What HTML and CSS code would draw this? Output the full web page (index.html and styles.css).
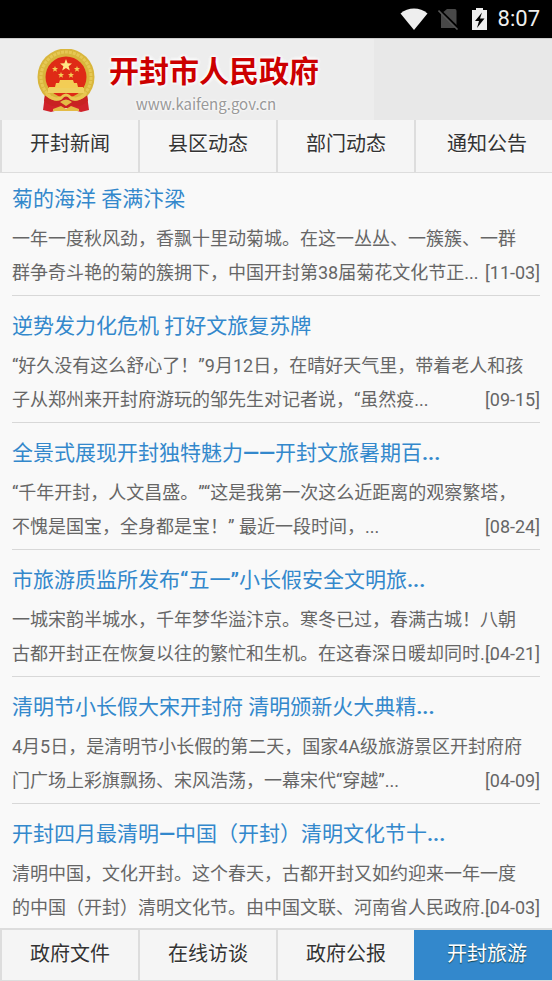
FILE: index.html
```html
<!DOCTYPE html>
<html lang="zh-CN">
<head>
<meta charset="utf-8">
<meta name="viewport" content="width=device-width, initial-scale=1">
<title>开封市人民政府</title>
<link rel="stylesheet" href="styles.css">
</head>
<body>
<div class="status">
  <svg class="wifi" viewBox="0 0 28 22" aria-hidden="true"><path d="M0.500 5.500C8-1.200 20-1.200 27.500 5.500L14 22Z" fill="#eee"/></svg>
  <svg class="sim" viewBox="0 0 21 22" aria-hidden="true"><path d="M9 1H17Q18.500 1 18.500 3V20H3V6Z" fill="#484848"/><path d="M1.500 2L21 21" stroke="#000" stroke-width="2.500"/><path d="M0.500 2.500L19.500 21.500" stroke="#555" stroke-width="1.600"/></svg>
  <svg class="battery" viewBox="0 0 15 22" aria-hidden="true"><path d="M4 0H11V2H15V22H0V2H4Z" fill="#eee"/><path d="M10 4.500L3 13H7L5 20L12.500 10.500H8Z" fill="#000"/></svg>
  <span class="clock">8:07</span>
</div>
<header class="banner">
  <div class="brand">
    <svg class="emblem" viewBox="0 0 58 63" aria-hidden="true">
      <path d="M8 46L6 61L14 63L29 59L44 63L52 61L50 46Z" fill="#d0222a"/>
      <circle cx="29" cy="28" r="28.500" fill="#d9b63c"/>
      <circle cx="29" cy="28" r="25" fill="none" stroke="#e6c854" stroke-width="3" stroke-dasharray="3 1"/>
      <circle cx="29" cy="28" r="20.500" fill="#df2a16"/>
      <path d="M29 10L30.600 14.300L35 14.500L31.600 17.300L32.800 21.500L29 19.100L25.200 21.500L26.400 17.300L23 14.500L27.400 14.300Z" fill="#ffe785"/>
      <g fill="#f3cd55">
        <path d="M18 17l.8 2 2.200.1-1.700 1.400.6 2.200-1.900-1.200-1.900 1.200.6-2.200-1.700-1.400 2.200-.1z"/>
        <path d="M40 17l.8 2 2.200.1-1.700 1.400.6 2.200-1.900-1.200-1.900 1.200.6-2.200-1.700-1.400 2.200-.1z"/>
        <path d="M24 23l.8 2 2.200.1-1.700 1.400.6 2.200-1.900-1.200-1.900 1.200.6-2.200-1.700-1.400 2.200-.1z"/>
        <path d="M34 23l.8 2 2.200.1-1.700 1.400.6 2.200-1.900-1.200-1.900 1.200.6-2.200-1.700-1.400 2.200-.1z"/>
        <path d="M23 31H36L37 34H40L41 38H46V43H12V38H18L19 34H22Z"/>
      </g>
      <path d="M11 39H47V44H11Z" fill="#efd060"/>
      <path d="M8 46Q17 54 24 51Q29 43 34 51Q41 54 50 46L51 52Q42 60 35 56Q29 61 23 56Q16 60 7 52Z" fill="#c82222"/>
      <path d="M9 45Q17 52 24 49Q29 43 34 49Q41 52 49 45" fill="none" stroke="#e9c64f" stroke-width="3"/>
      <path d="M16 60L24 57L29 60L34 57L42 60V62H16ZM23 53Q29 48 35 53L29 57Z" fill="#e4bb45"/>
    </svg>
    <div class="brand-text">
      <h1>开封市人民政府</h1>
      <span class="site">www.kaifeng.gov.cn</span>
    </div>
  </div>
</header>
<nav class="tabs">
  <a href="#">开封新闻</a><a href="#">县区动态</a><a href="#">部门动态</a><a href="#">通知公告</a>
</nav>
<main class="news">
  <article>
    <h2><a href="#">菊的海洋 香满汴梁</a></h2>
    <p>一年一度秋风劲，香飘十里动菊城。在这一丛丛、一簇簇、一群<br>群争奇斗艳的菊的簇拥下，中国开封第38届菊花文化节正...</p>
    <time>[11-03]</time>
  </article>
  <article>
    <h2><a href="#">逆势发力化危机 打好文旅复苏牌</a></h2>
    <p>“好久没有这么舒心了！”9月12日，在晴好天气里，带着老人和孩<br>子从郑州来开封府游玩的邹先生对记者说，“虽然疫...</p>
    <time>[09-15]</time>
  </article>
  <article>
    <h2><a href="#">全景式展现开封独特魅力<b>——</b>开封文旅暑期百<b>...</b></a></h2>
    <p>“千年开封，人文昌盛。”“这是我第一次这么近距离的观察繁塔，<br>不愧是国宝，全身都是宝！” 最近一段时间，...</p>
    <time>[08-24]</time>
  </article>
  <article>
    <h2><a href="#">市旅游质监所发布<b>“</b>五一<b>”</b>小长假安全文明旅<b>...</b></a></h2>
    <p>一城宋韵半城水，千年梦华溢汴京。寒冬已过，春满古城！八朝<br>古都开封正在恢复以往的繁忙和生机。在这春深日暖却同时...</p>
    <time>[04-21]</time>
  </article>
  <article>
    <h2><a href="#">清明节小长假大宋开封府 清明颁新火大典精<b>...</b></a></h2>
    <p>4月5日，是清明节小长假的第二天，国家4A级旅游景区开封府府<br>门广场上彩旗飘扬、宋风浩荡，一幕宋代“穿越”...</p>
    <time>[04-09]</time>
  </article>
  <article>
    <h2><a href="#">开封四月最清明<b>—</b>中国（开封）清明文化节十<b>...</b></a></h2>
    <p>清明中国，文化开封。这个春天，古都开封又如约迎来一年一度<br>的中国（开封）清明文化节。由中国文联、河南省人民政府...</p>
    <time>[04-03]</time>
  </article>
</main>
<nav class="tabs bottom">
  <a href="#">政府文件</a><a href="#">在线访谈</a><a href="#">政府公报</a><a href="#" class="active" aria-current="page">开封旅游</a>
</nav>
</body>
</html>
```
FILE: styles.css
```css
* { box-sizing: border-box; }
body {
  margin: 0;
  height: 100vh;
  display: flex;
  flex-direction: column;
  overflow: hidden;
  background: #f9f9f9;
  color: #666;
  font: 18px/34px Roboto, "Noto Sans CJK SC", sans-serif;
  text-spacing-trim: space-all;
}
a { color: inherit; text-decoration: none; }
.status {
  flex: none;
  height: 38px;
  padding-right: 12px;
  display: flex;
  align-items: center;
  justify-content: flex-end;
  background: #000;
}
.wifi { width: 28px; height: 22px; margin-right: 10px; }
.sim { width: 21px; height: 22px; margin-right: 13px; }
.battery { width: 15px; height: 22px; margin-right: 11px; }
.clock { color: #eee; font-size: 22px; line-height: 40px; }
.banner {
  flex: none;
  background: #e8e8e8;
  border-top: 1px solid #ccc;
}
.brand {
  width: 374px;
  height: 81px;
  padding: 10px 0 0 37px;
  display: flex;
  gap: 14px;
  background: #ededed;
}
.emblem { width: 58px; height: 63px; flex: none; }
.brand-text {
  display: flex;
  flex-direction: column;
  align-items: center;
  white-space: nowrap;
}
h1 {
  margin: 0;
  color: #c00;
  font-size: 30px;
  line-height: 46px;
  font-weight: 700;
  text-shadow: 0 0 4px #fff, 0 0 4px #fff, 0 0 4px #fff;
}
.site {
  padding-right: 16px;
  color: #999;
  font: 15px/18px "Noto Sans CJK SC", sans-serif;
  text-shadow: 0 0 3px #fff, 0 0 3px #fff;
}
.tabs {
  flex: none;
  height: 53px;
  display: grid;
  grid-template-columns: repeat(4, 1fr);
  background: #f5f5f5;
  border-bottom: 1px solid #ddd;
}
.tabs a {
  border-left: 2px solid #ddd;
  color: #333;
  font-size: 20px;
  line-height: 48px;
  text-align: center;
  text-shadow: 0 1px 0 #fff;
}
.tabs a:last-child { padding-left: 6px; }
.bottom { border-top: 2px solid #ddd; }
.bottom .active {
  background: #38c;
  border-left-color: #38c;
  color: #fff;
  text-shadow: 0 1px 1px #145;
}
.news { flex: 1; min-height: 0; overflow: hidden; padding: 0 12px; }
article {
  position: relative;
  padding: 12px 0 5px;
  border-bottom: 1px solid #d8d8d8;
  white-space: nowrap;
}
article:first-child { padding-top: 8px; }
h2 {
  margin: 0 0 5px;
  color: #38c;
  font-size: 21px;
  line-height: 36px;
  font-weight: 400;
}
p { margin: 0; }
time { position: absolute; right: 0; bottom: 5px; }
```
